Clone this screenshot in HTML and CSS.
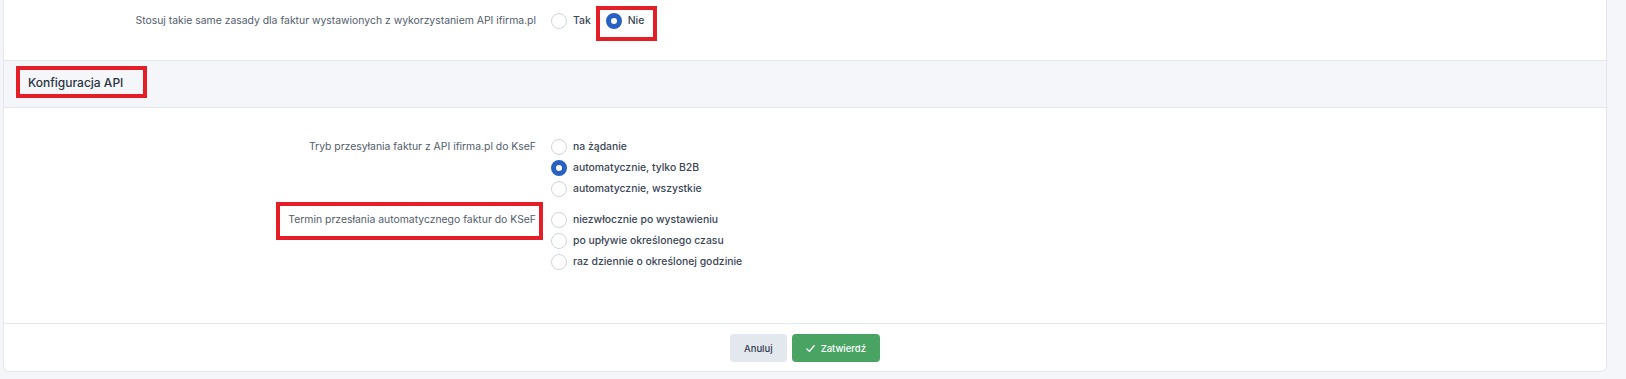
FILE: index.html
```html
<!DOCTYPE html>
<html lang="pl">
<head>
  <meta charset="UTF-8" />
  <meta name="viewport" content="width=device-width, initial-scale=1.0" />
  <title>Ustawienia KSeF</title>
  <link rel="stylesheet" href="styles.css">
</head>
<body>
  <div class="card">
    <div class="section top">
      <div class="row">
        <div class="label">Stosuj takie same zasady dla faktur wystawionych z wykorzystaniem API ifirma.pl</div>
        <div class="options inline">
          <label class="opt"><span class="radio"></span>Tak</label>
          <label class="opt mark mark-nie"><span class="radio on"></span>Nie</label>
        </div>
      </div>
    </div>

    <div class="band">
      <h3 class="band-title mark mark-title">Konfiguracja API</h3>
    </div>

    <div class="section body">
      <div class="row">
        <div class="label">Tryb przesyłania faktur z API ifirma.pl do KseF</div>
        <div class="options">
          <label class="opt"><span class="radio"></span>na żądanie</label>
          <label class="opt"><span class="radio on"></span>automatycznie, tylko B2B</label>
          <label class="opt"><span class="radio"></span>automatycznie, wszystkie</label>
        </div>
      </div>
      <div class="row">
        <div class="label"><span class="mark mark-termin">Termin przesłania automatycznego faktur do KSeF</span></div>
        <div class="options">
          <label class="opt"><span class="radio"></span>niezwłocznie po wystawieniu</label>
          <label class="opt"><span class="radio"></span>po upływie określonego czasu</label>
          <label class="opt"><span class="radio"></span>raz dziennie o określonej godzinie</label>
        </div>
      </div>
    </div>

    <div class="footer">
      <button class="btn btn-cancel">Anuluj</button>
      <button class="btn btn-ok">
        <svg width="9" height="9" viewBox="0 0 10 10"><polyline points="1,5.5 3.8,8.2 9,2" fill="none" stroke="#fff" stroke-width="1.5" stroke-linecap="round" stroke-linejoin="round"/></svg>
        Zatwierdź
      </button>
    </div>
  </div>
</body>
</html>
```

FILE: styles.css
```css
body {
  margin: 0;
  padding: 0 19px 7px 3px;
  background: #f4f6f9;
  font-family: Inter, "Noto Sans", sans-serif;
  font-size: 10.4px;
  color: #3b4656;
}
.card {
  background: #fff;
  border: 1px solid #e3e7ec;
  border-top: none;
  border-radius: 0 0 6px 6px;
}
.section.top {
  padding: 10px 0 29px;
}
.section.body {
  padding: 28px 0 51px;
  display: flex;
  flex-direction: column;
  gap: 10px;
}
.row {
  display: grid;
  grid-template-columns: 532px 1fr;
  column-gap: 15px;
}
.label {
  text-align: right;
  color: #525d6c;
  line-height: 21px;
}
.options {
  display: flex;
  flex-direction: column;
}
.options.inline {
  flex-direction: row;
  gap: 15px;
}
.opt {
  display: flex;
  align-items: center;
  gap: 6px;
  height: 21px;
  font-weight: 500;
  color: #3b4656;
}
.radio {
  width: 16px;
  height: 16px;
  box-sizing: border-box;
  border: 1px solid #cfd5dd;
  border-radius: 50%;
  background: #fff;
}
.radio.on {
  border: 5px solid #2861c2;
}
.band {
  background: #f4f6f9;
  border-top: 1px solid #e3e7ec;
  border-bottom: 1px solid #e3e7ec;
  padding: 14px 24px 16px;
}
.band-title {
  display: inline-block;
  margin: 0;
  font-size: 12px;
  font-weight: 500;
  line-height: 16px;
  color: #2b3442;
}
.footer {
  border-top: 1px solid #e3e7ec;
  padding: 10px 0 9px;
  display: flex;
  justify-content: center;
  gap: 5px;
}
.btn {
  height: 28px;
  padding: 0 14px;
  border: none;
  border-radius: 4px;
  font-family: inherit;
  font-size: 9.5px;
  font-weight: 500;
  display: flex;
  align-items: center;
  gap: 6px;
}
.btn-cancel {
  background: #e3e8ee;
  color: #354051;
}
.btn-ok {
  background: #49a463;
  color: #fff;
}

/* red annotation frames */
.mark {
  position: relative;
}
.mark::after {
  content: "";
  position: absolute;
  border: 4px solid #e31e26;
}
.mark-nie::after {
  inset: -4px -13px -10px -10px;
}
.mark-title::after {
  inset: -9px -24px -7px -12px;
}
.mark-termin {
  display: inline-block;
}
.mark-termin::after {
  inset: -7px -7px -10px -12px;
}
```
